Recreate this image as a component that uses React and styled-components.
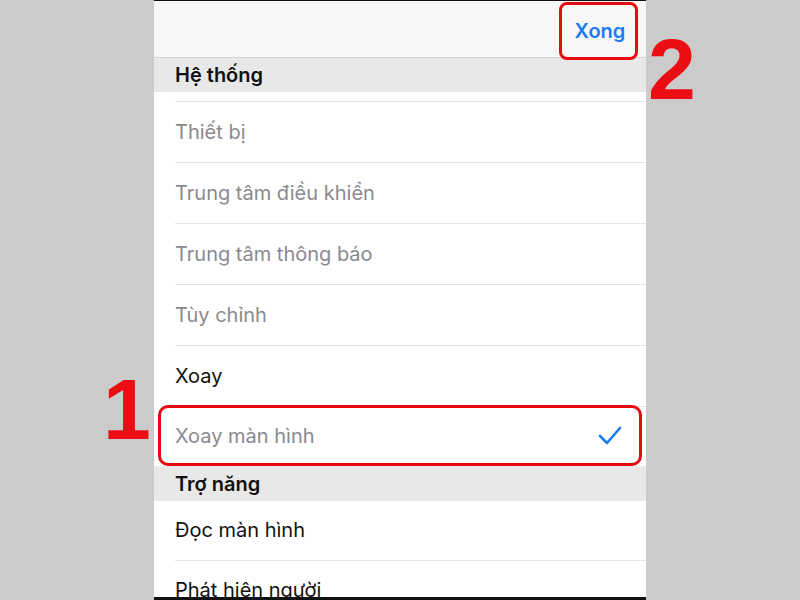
import React from "react";
import styled, { createGlobalStyle } from "styled-components";

const GlobalStyle = createGlobalStyle`
  html, body {
    margin: 0;
    padding: 0;
    background: #cbcbcb;
  }
  body {
    font-family: Inter, "Noto Sans", "Liberation Sans", sans-serif;
  }
`;

const Page = styled.div`
  width: 800px;
  height: 600px;
  display: flex;
  background: #cbcbcb;
  overflow: hidden;
`;

const Side = styled.div`
  width: ${(p) => p.width}px;
  padding-top: ${(p) => p.top}px;
  padding-left: ${(p) => p.left || 0}px;
  box-sizing: border-box;
`;

const Marker = styled.div`
  font-family: "Liberation Sans", Arial, sans-serif;
  font-weight: bold;
  font-size: 86px;
  line-height: 1;
  color: #ec0d14;
`;

const Phone = styled.div`
  width: 492px;
  height: 600px;
  display: flex;
  flex-direction: column;
  background: #fff;
  border-top: 1px solid #111;
  border-bottom: 3px solid #111;
  box-sizing: border-box;
  overflow: hidden;
`;

const TopBar = styled.div`
  height: 57px;
  flex-shrink: 0;
  display: flex;
  justify-content: flex-end;
  align-items: flex-start;
  padding: 1px 8px 0 0;
  box-sizing: border-box;
  background: #f7f7f7;
  border-bottom: 1px solid #d4d4d4;
`;

const DoneButton = styled.div`
  width: 79px;
  height: 58px;
  box-sizing: border-box;
  border: 3px solid #e80a12;
  border-radius: 8px;
  display: flex;
  align-items: center;
  justify-content: center;
  padding-left: 3px;
  color: #1b7cf2;
  font-size: 20px;
  font-weight: 600;
  position: relative;
  z-index: 1;
`;

const SectionHeader = styled.div`
  height: ${(p) => p.h}px;
  flex-shrink: 0;
  display: flex;
  align-items: center;
  padding-left: 21px;
  background: #e8e8e8;
  color: #111;
  font-size: 20px;
  font-weight: 600;
`;

const Tail = styled.div`
  height: 9px;
  flex-shrink: 0;
  margin-left: 21px;
  border-bottom: 1px solid #e3e3e3;
`;

const Row = styled.div`
  position: relative;
  height: ${(p) => p.h}px;
  flex-shrink: 0;
  display: flex;
  align-items: center;
  justify-content: space-between;
  padding: 0 24px 2px 21px;
  box-sizing: border-box;
  font-size: 20px;
  color: ${(p) => (p.dim ? "#8a8a8e" : "#111")};
  &::after {
    content: "";
    display: ${(p) => (p.last ? "none" : "block")};
    position: absolute;
    left: 21px;
    right: 0;
    bottom: 0;
    border-bottom: 1px solid #e3e3e3;
  }
`;

const Highlight = styled.div`
  position: absolute;
  left: 4px;
  right: 4px;
  top: -2px;
  bottom: 0;
  border: 3px solid #e80a12;
  border-radius: 10px;
`;

const Check = () => (
  <svg width="24" height="20" viewBox="0 0 24 20">
    <polyline
      points="2,10 9,17 22,2"
      fill="none"
      stroke="#1b7cf2"
      strokeWidth="2.6"
      strokeLinecap="round"
      strokeLinejoin="round"
    />
  </svg>
);

const systemItems = [
  { label: "Thiết bị", dim: true },
  { label: "Trung tâm điều khiển", dim: true },
  { label: "Trung tâm thông báo", dim: true },
  { label: "Tùy chỉnh", dim: true },
  { label: "Xoay", dim: false },
];

export default function App() {
  return (
    <Page>
      <GlobalStyle />
      <Side width={154} top={366} left={103}>
        <Marker>1</Marker>
      </Side>
      <Phone>
        <TopBar>
          <DoneButton>Xong</DoneButton>
        </TopBar>
        <SectionHeader h={34}>Hệ thống</SectionHeader>
        <Tail />
        {systemItems.map((item) => (
          <Row key={item.label} h={61} dim={item.dim}>
            {item.label}
          </Row>
        ))}
        <Row h={59} dim last>
          Xoay màn hình
          <Check />
          <Highlight />
        </Row>
        <SectionHeader h={35}>Trợ năng</SectionHeader>
        <Row h={60}>Đọc màn hình</Row>
        <Row h={60} last>
          Phát hiện người
        </Row>
      </Phone>
      <Side width={154} top={26} left={2}>
        <Marker>2</Marker>
      </Side>
    </Page>
  );
}
